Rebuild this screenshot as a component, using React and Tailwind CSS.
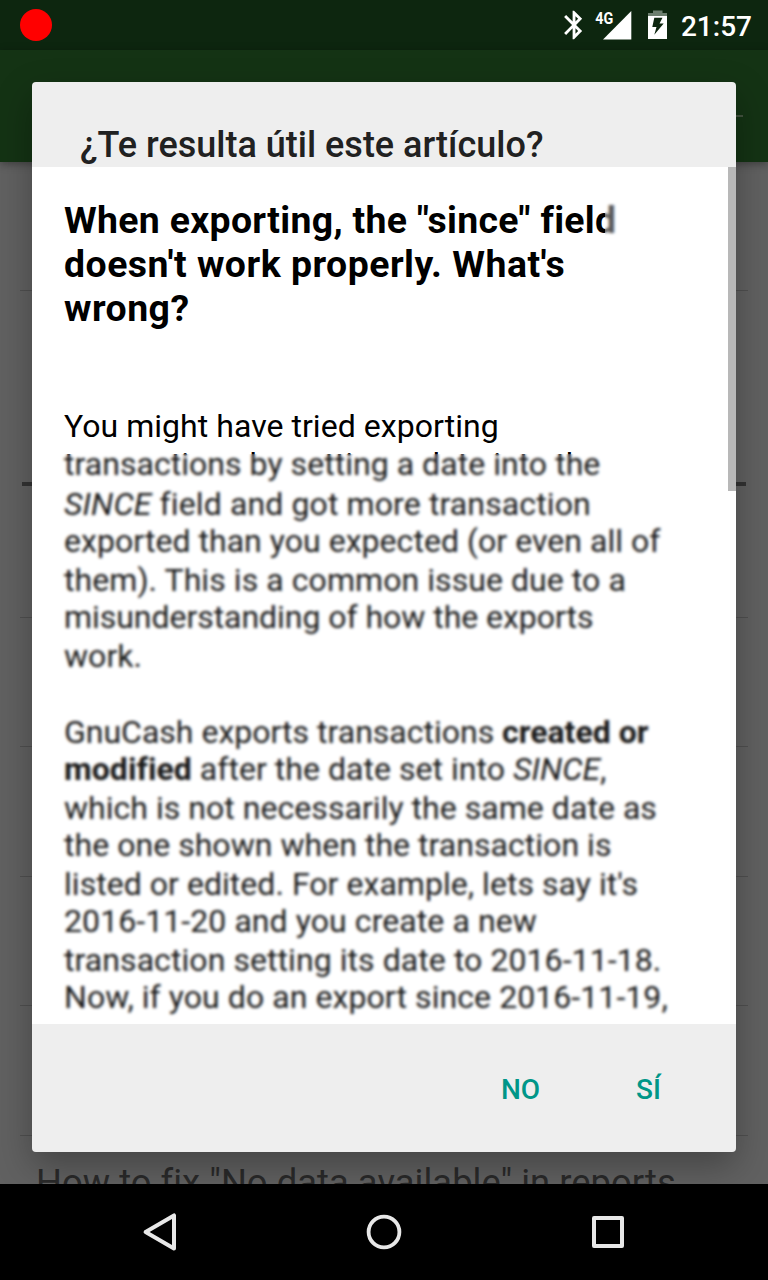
function StatusBar() {
  return (
    <header className="flex h-[50px] items-center bg-[#0d260f] pl-[20px] pr-[16px]">
      <span className="size-[32px] rounded-full bg-[#ff0000]" />
      <div className="ml-auto flex h-full items-center">
        <svg width="106" height="32" viewBox="562 9 106 32" className="mr-[13px]">
          <path
            transform="translate(557,7.9) scale(1.42)"
            fill="#fff"
            d="M17.71 7.71L12 2h-1v7.59L6.41 5 5 6.41 10.59 12 5 17.59 6.41 19 11 14.41V22h1l5.71-5.71-4.3-4.29 4.3-4.29zM13 5.83l1.88 1.88L13 9.59V5.83zm1.88 10.46L13 18.17v-3.76l1.88 1.88z"
          />
          <path fill="#fff" d="M603 39.5H631.3V11z" />
          <text
            x="595.3"
            y="23.6"
            fill="#fff"
            fontFamily="Roboto, sans-serif"
            fontSize="16.5"
            fontWeight="700"
            textLength="18"
            lengthAdjust="spacingAndGlyphs"
          >
            4G
          </text>
          <path fill="#6d7f6f" d="M653 10.5h9.5V13H667v3h-19v-3h5z" />
          <path fill="#fff" d="M648 16h19v23h-19z" />
          <path fill="#0d260f" d="M654.3 17.7h8.2l-3 5.8h4.2l-9.4 11.2 2.2-7.7h-4.2z" />
        </svg>
        <span className="pt-[3px] text-[28px] font-medium leading-[52px] text-white">21:57</span>
      </div>
    </header>
  );
}

function AppBar() {
  return (
    <div className="relative flex h-[112px] items-start justify-end bg-[#143314] pr-[25px] pt-[65px] shadow-[0_2px_8px_rgba(0,0,0,0.35)]">
      <span className="h-[2px] w-[280px] bg-[#43533f]" />
    </div>
  );
}

function ArticleList() {
  return (
    <div className="flex h-[1022px] flex-col overflow-hidden bg-[#616161] px-[20px]">
      <div className="h-[129px] shrink-0 border-b border-[#505050]" />
      <div className="mx-[2px] h-[195px] shrink-0 border-b-4 border-[#333333]" />
      <div className="h-[132px] shrink-0 border-b border-[#505050]" />
      <div className="h-[129px] shrink-0 border-b border-[#505050]" />
      <div className="h-[130px] shrink-0 border-b border-[#505050]" />
      <div className="h-[129px] shrink-0 border-b border-[#505050]" />
      <div className="h-[130px] shrink-0 border-b border-[#505050]" />
      <p className="whitespace-nowrap pl-[16px] pt-[25px] text-[36.4px] leading-[44px] tracking-[0.02px] text-[#2a2a2a]">
        How to fix "No data available" in reports
      </p>
    </div>
  );
}

function NavBar() {
  return (
    <nav className="flex h-[96px] items-center justify-center gap-[184px] bg-black">
      <svg width="40" height="40" viewBox="0 0 40 40" fill="none" stroke="#e8e8e8" strokeWidth="4" strokeLinejoin="round">
        <path d="M5.6 20 34 3.4v33.2z" />
      </svg>
      <svg width="40" height="40" viewBox="0 0 40 40" fill="none" stroke="#e8e8e8" strokeWidth="3.8">
        <circle cx="20" cy="20" r="15.4" />
      </svg>
      <svg width="40" height="40" viewBox="0 0 40 40" fill="none" stroke="#e8e8e8" strokeWidth="4" strokeLinejoin="round">
        <path d="M6 6h28v28H6z" />
      </svg>
    </nav>
  );
}

function Article() {
  return (
    <article className="relative h-[857px] overflow-hidden whitespace-nowrap bg-white px-[32px] pt-[31px] text-black">
      <h3 className="text-[37.4px] font-bold leading-[44px] tracking-[0.48px]">
        <span className="tracking-[0.32px]">When exporting, the "since" field</span>
        <br />
        <span className="tracking-[0.5px]">doesn't work properly. What's</span>
        <br />
        wrong?
      </h3>
      <div className="mt-[77px] text-[32px] tracking-[0.04px]">
        <p className="leading-[38px]">You might have tried exporting</p>
        <p className="leading-[38px]">transactions by setting a date into the</p>
        <p className="leading-[42px] tracking-[0.12px]">
          <i>SINCE</i> field and got more transaction
        </p>
        <p className="leading-[32px]">exported than you expected (or even all of</p>
        <p className="leading-[46px] tracking-[0.07px]">them). This is a common issue due to a</p>
        <p className="leading-[28px] tracking-[-0.04px]">misunderstanding of how the exports</p>
        <p className="leading-[50px]">work.</p>
        <p className="mt-[30px] leading-[42px] tracking-[0px]">
          GnuCash exports transactions <b>created or</b>
        </p>
        <p className="leading-[32px]">
          <b>modified</b> after the date set into <i>SINCE</i>,
        </p>
        <p className="leading-[46px]">which is not necessarily the same date as</p>
        <p className="leading-[28px]">the one shown when the transaction is</p>
        <p className="leading-[50px]">listed or edited. For example, lets say it's</p>
        <p className="leading-[24px] tracking-[0.08px]">2016-11-20 and you create a new</p>
        <p className="leading-[54px] tracking-[0.07px]">transaction setting its date to 2016-11-18.</p>
        <p className="leading-[20px] tracking-[0.07px]">Now, if you do an export since 2016-11-19,</p>
      </div>
      <span className="absolute left-[573px] top-[33px] h-[44px] w-[30px] bg-white/35 backdrop-blur-[1.5px]" />
      <span className="absolute inset-x-0 bottom-0 top-[287px] bg-white/10 backdrop-blur-[1.6px]" />
      <span className="absolute right-0 top-0 h-[324px] w-[8px] bg-[#b8b8b8]" />
    </article>
  );
}

function Dialog() {
  return (
    <section className="absolute left-[32px] top-[82px] w-[704px] overflow-hidden rounded-[4px] bg-[#eeeeee]">
      <h2 className="h-[85px] pl-[48px] pt-[41px] text-[36px] font-medium leading-[44px] text-[#212121]">
        ¿Te resulta útil este artículo?
      </h2>
      <Article />
      <footer className="flex h-[128px] items-center justify-end gap-[96px] pr-[75px] pt-[4px] text-[28px] font-medium text-[#009688]">
        <button>NO</button>
        <button>SÍ</button>
      </footer>
    </section>
  );
}

export default function App() {
  return (
    <div className="relative h-[1280px] w-[768px] overflow-hidden font-['Roboto',sans-serif]">
      <StatusBar />
      <AppBar />
      <ArticleList />
      <div className="absolute left-[32px] top-[82px] h-[1070px] w-[704px] rounded-[4px] shadow-[0_14px_36px_rgba(0,0,0,0.3)]" />
      <Dialog />
      <div className="relative">
        <NavBar />
      </div>
    </div>
  );
}
